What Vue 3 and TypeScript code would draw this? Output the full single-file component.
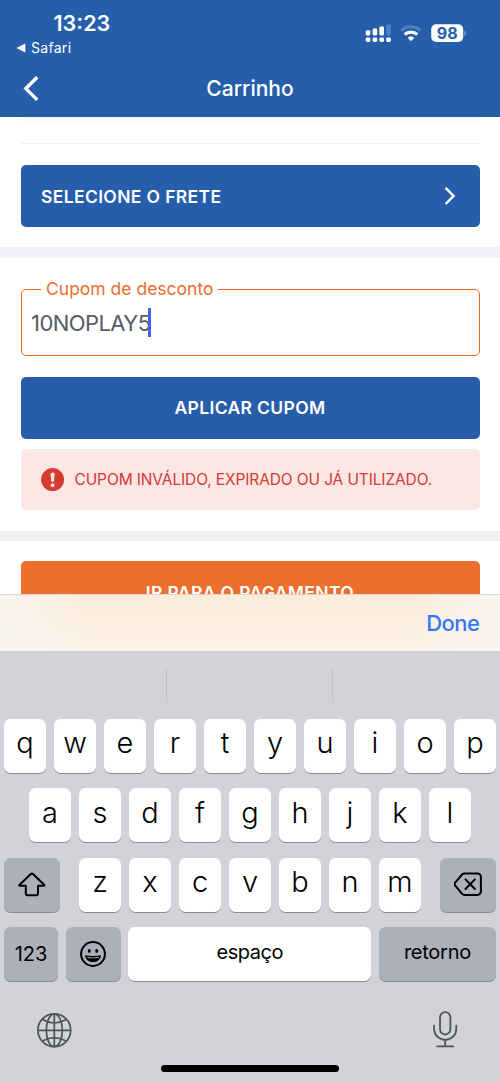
<script setup lang="ts">
const topKeys: string[] = [...'qwertyuiop']
const middleKeys: string[] = [...'asdfghjkl']
const bottomKeys: string[] = [...'zxcvbnm']
</script>

<template>
  <div class="screen">
    <header class="header">
      <div class="status">
        <div class="status-left">
          <div class="time">13:23</div>
          <div class="back-app">
            <svg width="10" height="10" viewBox="0 0 10 10"><path d="M.3 5 9.3.5v9z" fill="#fff" /></svg>
            <span>Safari</span>
          </div>
        </div>
        <svg class="indicators" width="102" height="20" viewBox="0 0 102 20">
          <g fill="#fff">
            <rect x="1.7" y="7.2" width="4.6" height="5.2" rx="1.4" />
            <rect x="8.6" y="5.6" width="4.6" height="6.8" rx="1.4" />
            <rect x="15.4" y="3.4" width="4.6" height="9" rx="1.4" />
            <rect x="1.7" y="14.4" width="4.6" height="4.6" rx="1.4" />
            <rect x="8.6" y="14.4" width="4.6" height="4.6" rx="1.4" />
            <rect x="15.4" y="14.4" width="4.6" height="4.6" rx="1.4" />
            <rect x="22.2" y="14.4" width="4.6" height="4.6" rx="1.4" />
          </g>
          <rect x="22.2" y="1.4" width="4.6" height="11" rx="1.4" fill="#4d81bf" />
          <path d="M37.4 7.6a14.2 14.2 0 0 1 19.2 0" fill="none" stroke="#4d81bf" stroke-width="3" />
          <path d="M40.700 11.5a9.400 9.400 0 0 1 12.600 0" fill="none" stroke="#fff" stroke-width="3.200" />
          <path d="M43.700 14.800a4.800 4.800 0 0 1 6.600 0L47 18.200z" fill="#fff" />
          <rect x="67.2" y="1.3" width="32" height="17.6" rx="5" fill="#fff" />
          <path d="M100.2 7.5q1.8.6 1.8 2.7t-1.8 2.7z" fill="#6f98cb" />
          <text x="83.2" y="15.7" text-anchor="middle" class="battery">98</text>
        </svg>
      </div>
      <div class="nav">
        <svg class="nav-back" width="16" height="26" viewBox="0 0 16 26"><path d="M14.2 1.3 2.9 12.6 14.2 23.9" fill="none" stroke="#fff" stroke-width="3.4" /></svg>
        <div class="title">Carrinho</div>
      </div>
    </header>

    <main class="content">
      <div class="card-end"></div>
      <section class="shipping">
        <button class="btn btn-shipping">
          <span>SELECIONE O FRETE</span>
          <svg width="12" height="20" viewBox="0 0 12 20"><path d="m1.6 1.8 8 8.1-8 8.1" fill="none" stroke="#fff" stroke-width="2.4" /></svg>
        </button>
      </section>
      <section class="coupon">
        <fieldset class="field">
          <legend>Cupom de desconto</legend>
          <div class="value"><span>10NOPLAY5</span><i class="caret"></i></div>
        </fieldset>
        <button class="btn btn-apply"><span>APLICAR CUPOM</span></button>
        <div class="alert">
          <svg width="24" height="24" viewBox="0 0 24 24">
            <circle cx="11.6" cy="11.6" r="11.5" fill="#d63a31" />
            <path d="M9.6 6.3q0-1.7 2-1.7t2 1.7l-.6 6.300q-.2 1.400-1.400 1.400t-1.400-1.400z" fill="#fbe6e5" />
            <circle cx="11.6" cy="17.200" r="1.900" fill="#fbe6e5" />
          </svg>
          <span>CUPOM INVÁLIDO, EXPIRADO OU JÁ UTILIZADO.</span>
        </div>
      </section>
      <section class="checkout">
        <button class="btn btn-pay"><span>IR PARA O PAGAMENTO</span></button>
      </section>
    </main>

    <div class="accessory"><span>Done</span></div>

    <div class="keyboard">
      <div class="suggestions"><i></i><i></i><i></i></div>
      <div class="row row-top">
        <div v-for="k in topKeys" :key="k" class="key letter">{{ k }}</div>
      </div>
      <div class="row row-middle">
        <div v-for="k in middleKeys" :key="k" class="key letter">{{ k }}</div>
      </div>
      <div class="row row-bottom">
        <div class="key dark modifier">
          <svg width="28" height="25" viewBox="0 0 28 25"><path d="M13.1 1.8 1.6 12.8q-.8 1 .5 1H7.8v8q0 1.4 1.4 1.4h9.4q1.4 0 1.4-1.4v-8h5.7q1.3 0 .5-1L14.7 1.8q-.8-.7-1.6 0z" fill="none" stroke="#000" stroke-width="2" stroke-linejoin="round" /></svg>
        </div>
        <div class="letters">
          <div v-for="k in bottomKeys" :key="k" class="key letter">{{ k }}</div>
        </div>
        <div class="key dark modifier">
          <svg width="28" height="25" viewBox="0 0 28 25">
            <path d="M10.5 1.500H23.500a3.400 3.400 0 0 1 3.400 3.400V19.500a3.400 3.400 0 0 1-3.400 3.400H10.500q-1.400 0-2.400-1L1.200 13.700q-1.200-1.500 0-3L8.100 2.500q1-1 2.400-1z" fill="none" stroke="#000" stroke-width="2" />
            <path d="m11.500 7.400 9.400 9.600m0-9.600-9.400 9.600" stroke="#000" stroke-width="2" stroke-linecap="round" />
          </svg>
        </div>
      </div>
      <div class="row row-space">
        <div class="key dark numbers"><span>123</span></div>
        <div class="key dark emoji">
          <svg width="28" height="28" viewBox="0 0 28 28">
            <circle cx="14" cy="14" r="11.900" fill="none" stroke="#000" stroke-width="2" />
            <ellipse cx="10.300" cy="10.900" rx="1.500" ry="1.900" />
            <ellipse cx="17.700" cy="10.900" rx="1.500" ry="1.900" />
            <path d="M5.900 15.200q8.100 1.600 16.200 0-1 6.900-8.100 6.900t-8.100-6.900z" />
            <path d="M7.800 16.800q6.200 1.200 12.400 0l-.4 1q-5.800 1-11.600 0z" fill="#abb0ba" />
          </svg>
        </div>
        <div class="key space"><span>espaço</span></div>
        <div class="key dark return"><span>retorno</span></div>
      </div>
      <div class="bottom-bar">
        <svg width="36" height="36" viewBox="0 0 36 36" fill="none" stroke="#50545a" stroke-width="1.7">
          <circle cx="18.3" cy="18.3" r="16.4" />
          <ellipse cx="18.3" cy="18.3" rx="8" ry="16.4" />
          <path d="M18.3 1.900v32.800M1.900 18.300h32.800M6.500 7.500Q18.300 14.500 30.100 7.500M6.500 29.100Q18.300 22.100 30.100 29.100" />
        </svg>
        <svg width="26" height="38" viewBox="0 0 26 38" fill="none" stroke="#50545a" stroke-width="1.800" stroke-linecap="round">
          <rect x="8" y="1.100" width="10.400" height="22.400" rx="5.200" />
          <path d="M2.100 14.700v3.200a11.100 11 0 0 0 22.200 0v-3.200M13.200 29v6.400M5.200 35.400h16" />
        </svg>
      </div>
      <div class="home"></div>
    </div>
  </div>
</template>

<style>
body {
  margin: 0;
}
</style>

<style scoped>
.screen {
  box-sizing: border-box;
  width: 500px;
  height: 1082px;
  overflow: hidden;
  display: flex;
  flex-direction: column;
  background: #fff;
  font-family: Inter, "Liberation Sans", sans-serif;
}
.screen * {
  box-sizing: border-box;
}
svg {
  display: block;
  flex: none;
}
span,
.time,
.title {
  white-space: nowrap;
}
.header {
  height: 117px;
  flex: none;
  background: #265eab;
  color: #fff;
}
.status {
  height: 60px;
  display: flex;
  justify-content: space-between;
  padding: 10px 34px 0 16px;
}
.time {
  padding-left: 37.5px;
  font-size: 21.5px;
  font-weight: 560;
  line-height: 27px;
  letter-spacing: 0;
}
.back-app {
  display: flex;
  align-items: center;
  gap: 5px;
  margin-top: 1px;
  font-size: 14px;
  font-weight: 430;
  line-height: 20px;
  letter-spacing: 0.3px;
}
.indicators {
  margin-top: 13px;
}
.battery {
  font: 700 16px Inter, sans-serif;
  fill: #265eab;
}
.nav {
  height: 57px;
  display: grid;
  grid-template-columns: 50px 1fr 50px;
  align-items: center;
}
.nav-back {
  margin-left: 23px;
}
.title {
  text-align: center;
  font-size: 21px;
  font-weight: 500;
}
.content {
  height: 477px;
  flex: none;
  overflow: hidden;
}
.card-end {
  height: 6px;
  margin: 0 20.5px;
  border-radius: 0 0 5px 5px;
  background: #fafafb;
}
.shipping {
  margin: 20px 20.5px 20px;
  padding-top: 21px;
  border-top: 1px solid #eeeff1;
}
.btn {
  width: 100%;
  height: 62px;
  display: flex;
  align-items: center;
  justify-content: center;
  border: 0;
  border-radius: 5px;
  padding: 0;
  background: #265eab;
  color: #fff;
  font: 600 17.5px Inter, sans-serif;
  letter-spacing: 0.36px;
}
.btn-shipping {
  justify-content: space-between;
  padding: 0 23.5px 0 20.5px;
}
.coupon {
  padding: 20px 20.5px;
  border-top: 11px solid #f0f2f5;
  border-bottom: 10px solid #f0f2f5;
  height: 294px;
}
.field {
  height: 78px;
  margin: 0;
  padding: 0 9.5px;
  border: 1px solid #eb6a25;
  border-radius: 5px;
}
.field legend {
  margin-left: 10px;
  padding: 0 5px;
  color: #eb6e2d;
  font-size: 17.5px;
  line-height: 22px;
}
.value {
  display: flex;
  align-items: center;
  height: 45px;
  color: #555b68;
  font-size: 22px;
  letter-spacing: -0.56px;
}
.caret {
  width: 3px;
  height: 29px;
  margin-left: -2.5px;
  background: #4663e4;
}
.btn-apply {
  margin-top: 21px;
  padding-bottom: 2px;
}
.alert {
  display: flex;
  align-items: center;
  gap: 10px;
  height: 61px;
  margin-top: 10px;
  padding-left: 20px;
  border-radius: 5px;
  background: #fae6e5;
  color: #d63a31;
  font-size: 15.5px;
  letter-spacing: -0.12px;
}
.checkout {
  padding: 20px 20.5px 0;
}
.btn-pay {
  background: #ec6f2d;
}
.accessory {
  height: 57px;
  flex: none;
  display: flex;
  align-items: center;
  justify-content: flex-end;
  padding-right: 20.5px;
  border-top: 1px solid #d9d7d5;
  background: linear-gradient(90deg, #faf4f0 0, #faf4f000 18%, #faf4f000 82%, #faf4f0 100%), linear-gradient(#fbecd9, #fcf2e8);
  color: #3478f6;
  font-size: 22px;
  font-weight: 500;
  letter-spacing: -0.5px;
}
.keyboard {
  height: 431px;
  flex: none;
  background: #d1d3d9;
  color: #000;
}
.suggestions {
  display: grid;
  grid-template-columns: 167px 166px 167px;
  height: 68px;
  padding: 17px 0;
}
.suggestions i + i {
  border-left: 1px solid #bfc1c6;
  margin-left: -1px;
}
.row {
  display: flex;
  gap: 8px;
  height: 54px;
  margin-bottom: 15.35px;
  padding: 0 4px;
}
.row-middle {
  justify-content: center;
}
.row-bottom {
  justify-content: space-between;
}
.letters {
  display: flex;
  gap: 8px;
}
.key {
  display: flex;
  align-items: center;
  justify-content: center;
  height: 54px;
  border-radius: 6.5px;
  background: #fff;
  box-shadow: 0 1px 0 #898b8f;
  font-size: 20px;
}
.letter {
  width: 42px;
  padding-bottom: 6.4px;
  font-size: 29px;
  font-weight: 340;
}
.dark {
  background: #abb0ba;
}
.modifier {
  width: 56px;
}
.numbers {
  width: 54px;
  font-weight: 380;
}
.emoji {
  width: 55px;
}
.space {
  width: 243px;
  padding-bottom: 4px;
  letter-spacing: -0.45px;
}
.return {
  width: 117px;
  padding-bottom: 4px;
  letter-spacing: -0.25px;
}
.row-space {
  gap: 0;
  justify-content: space-between;
}
.bottom-bar {
  display: flex;
  justify-content: space-between;
  align-items: center;
  height: 38px;
  margin-top: 30px;
  padding: 0 42px 0 36px;
}
.home {
  width: 178px;
  height: 7px;
  margin: 16px auto 0;
  border-radius: 4px;
  background: #000;
}
</style>
